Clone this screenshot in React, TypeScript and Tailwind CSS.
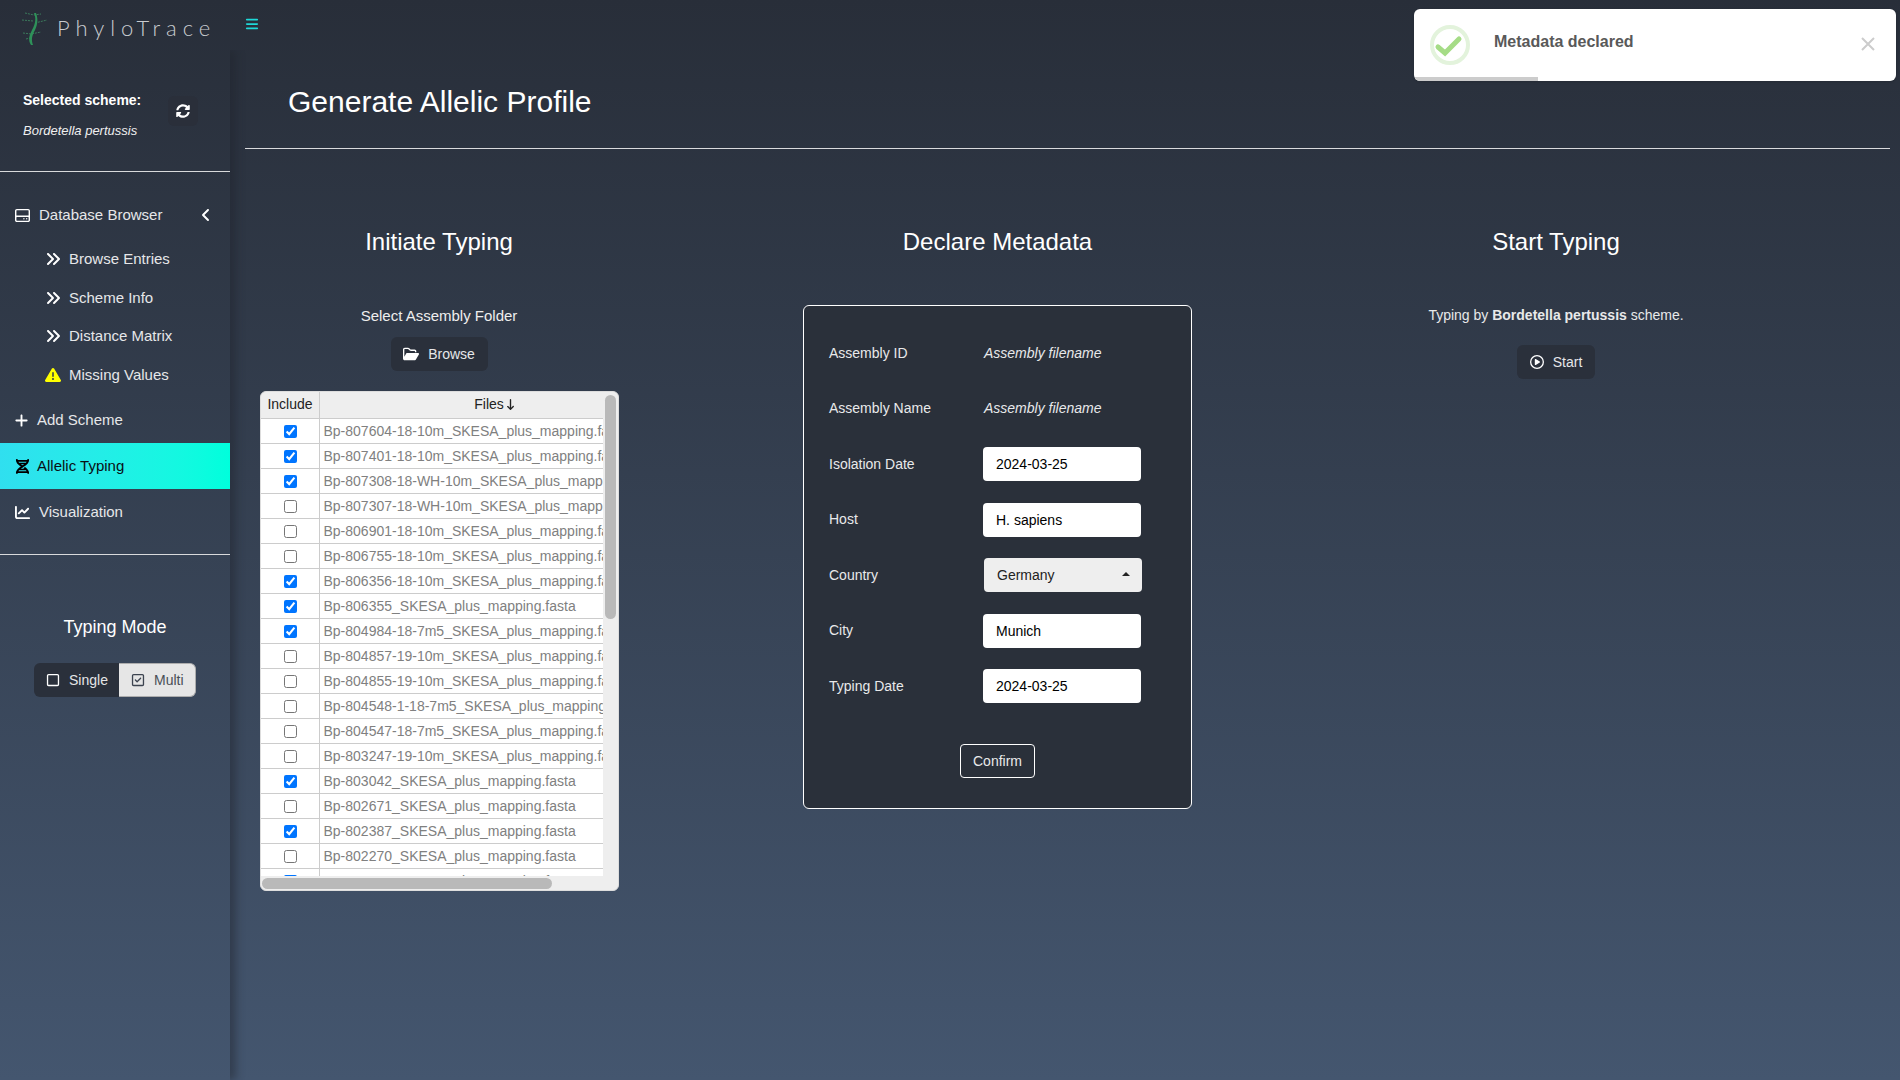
import { FaSyncAlt } from "react-icons/fa";
import {
  FaAngleLeft,
  FaAnglesRight,
  FaArrowDownLong,
  FaBars,
  FaChartLine,
  FaDna,
  FaPlus,
  FaRegCirclePlay,
  FaRegFolderOpen,
  FaRegHardDrive,
  FaRegSquare,
  FaRegSquareCheck,
  FaTriangleExclamation,
} from "react-icons/fa6";

const files: [string, boolean][] = [
  ["Bp-807604-18-10m_SKESA_plus_mapping.fasta", true],
  ["Bp-807401-18-10m_SKESA_plus_mapping.fasta", true],
  ["Bp-807308-18-WH-10m_SKESA_plus_mapping.fasta", true],
  ["Bp-807307-18-WH-10m_SKESA_plus_mapping.fasta", false],
  ["Bp-806901-18-10m_SKESA_plus_mapping.fasta", false],
  ["Bp-806755-18-10m_SKESA_plus_mapping.fasta", false],
  ["Bp-806356-18-10m_SKESA_plus_mapping.fasta", true],
  ["Bp-806355_SKESA_plus_mapping.fasta", true],
  ["Bp-804984-18-7m5_SKESA_plus_mapping.fasta", true],
  ["Bp-804857-19-10m_SKESA_plus_mapping.fasta", false],
  ["Bp-804855-19-10m_SKESA_plus_mapping.fasta", false],
  ["Bp-804548-1-18-7m5_SKESA_plus_mapping.fasta", false],
  ["Bp-804547-18-7m5_SKESA_plus_mapping.fasta", false],
  ["Bp-803247-19-10m_SKESA_plus_mapping.fasta", false],
  ["Bp-803042_SKESA_plus_mapping.fasta", true],
  ["Bp-802671_SKESA_plus_mapping.fasta", false],
  ["Bp-802387_SKESA_plus_mapping.fasta", true],
  ["Bp-802270_SKESA_plus_mapping.fasta", false],
  ["Bp-801944_SKESA_plus_mapping.fasta", true],
];

function Logo() {
  return (
    <div className="flex items-center w-[230px] h-[50px] pl-[22px]">
      <svg width="25" height="33" viewBox="0 0 25 33" className="mt-[7px] shrink-0">
        <path d="M0 8 L11 9 M3 1 L12 3 L19 2 M13 11 L25 8 M1 21 L9 22 L19 20 M4 27 L8 26" stroke="#3b7a5c" strokeWidth="1" strokeDasharray="2 1" fill="none" />
        <path d="M12 1 C14 6 14 11 10 18 C7 24 6 28 9 33 L11 33 C9 27 10 24 13 18 C16 12 16 6 14 1 Z" fill="#2e9159" />
      </svg>
      <span className="ml-[10px] mt-[5px] text-[22px] font-light tracking-[0.27em] text-[#c9ccd0] font-['Lato',sans-serif]">
        PhyloTrace
      </span>
    </div>
  );
}

function SubItem({ label, warn }: { label: string; warn?: boolean }) {
  return (
    <div className="flex items-center h-[38.5px] pl-[45px] text-[15px] text-[#e6e7e9]">
      <span className="flex justify-center w-[16px] mr-[8px]">
        {warn ? (
          <FaTriangleExclamation className="text-[16px] text-[#ffff00]" />
        ) : (
          <FaAnglesRight className="text-[16px] text-white" />
        )}
      </span>
      {label}
    </div>
  );
}

function Sidebar() {
  return (
    <aside className="w-[230px] h-full shrink-0 shadow-[6px_0_8px_rgba(30,35,45,0.45)] [clip-path:inset(0_-20px_0_0)]">
      <div className="relative h-[122px] border-b border-[#d9dadc] pl-[23px] pt-[42px] text-white">
        <div className="text-[14px] font-bold leading-[16px]">Selected scheme:</div>
        <div className="mt-[15px] text-[13px] italic leading-[16px] text-[#f0f0f0]">Bordetella pertussis</div>
        <button className="absolute left-[168px] top-[46px] flex items-center justify-center w-[30px] h-[30px] rounded-md bg-[#2a2f3a]">
          <FaSyncAlt className="text-[14px] text-white" />
        </button>
      </div>

      <div className="pt-[23px]">
        <div className="relative flex items-center h-[40px] pl-[15px] text-[15px] text-[#e6e7e9]">
          <FaRegHardDrive className="text-[15px] text-white mr-[9px]" />
          Database Browser
          <FaAngleLeft className="absolute left-[198px] text-[16px] text-white" />
        </div>
        <div className="pt-[5px]">
          <SubItem label="Browse Entries" />
          <SubItem label="Scheme Info" />
          <SubItem label="Distance Matrix" />
          <SubItem label="Missing Values" warn />
        </div>
        <div className="flex items-center h-[45px] mt-[4px] pl-[14px] text-[15px] text-[#e6e7e9]">
          <FaPlus className="text-[15px] text-white mr-[8px]" />
          Add Scheme
        </div>
        <div className="flex items-center h-[46px] pl-[15px] text-[15px] text-[#0a0f14] bg-linear-to-r from-[#30dfef] to-[#00ffdc]">
          <FaDna className="text-[15px] text-black mr-[7px]" />
          Allelic Typing
        </div>
        <div className="flex items-center h-[46px] pl-[15px] text-[15px] text-[#e6e7e9]">
          <FaChartLine className="text-[15px] text-white mr-[9px]" />
          Visualization
        </div>
      </div>

      <div className="mt-[19px] border-t border-[#d9dadc] pt-[62px]">
        <div className="text-center text-[18px] leading-[20px] text-white">Typing Mode</div>
        <div className="flex mt-[26px] ml-[34px] h-[34px] w-[162px] text-[14px]">
          <div className="flex items-center w-[85px] pl-[12px] rounded-l-md bg-[#2a303b] text-[#e4e5e7]">
            <FaRegSquare className="text-[14px] text-white mr-[9px]" />
            Single
          </div>
          <div className="flex items-center w-[77px] pl-[12px] rounded-r-md bg-[#e6e6e6] border border-[#adadad] border-l-0 text-[#4a4f57]">
            <FaRegSquareCheck className="text-[14px] text-[#3d4450] mr-[9px]" />
            Multi
          </div>
        </div>
      </div>
    </aside>
  );
}

function FileTable() {
  return (
    <div className="w-[359px] h-[500px] mx-auto mt-[20px] rounded-md bg-[#eeeeee] overflow-hidden flex flex-col border border-[#dddddd] text-left">
      <div className="flex h-[484px]">
        <div className="w-[344px] h-full overflow-hidden">
          <div className="flex h-[27px] pb-[2px] text-[14px] text-[#222222] border-b border-[#cccccc]">
            <div className="flex items-center justify-center w-[59px] pl-[1px] shrink-0 border-r border-[#cccccc] mb-[-2px] pb-[2px]">Include</div>
            <div className="flex items-center justify-center flex-1 pl-[68px]">
              Files
              <FaArrowDownLong className="ml-[1px] text-[11px] text-[#222222]" />
            </div>
          </div>
          {files.map(([name, checked]) => (
            <div key={name} className="flex h-[25px] bg-white border-b border-[#cccccc] text-[14px] text-[#808080]">
              <div className="flex items-center justify-center w-[59px] pl-[1px] shrink-0 border-r border-[#cccccc]">
                <input type="checkbox" defaultChecked={checked} />
              </div>
              <div className="pl-[4px] leading-[24px] whitespace-nowrap overflow-hidden flex-1">{name}</div>
            </div>
          ))}
        </div>
        <div className="flex-1 pl-[2px] pr-[2px] pt-[3px]">
          <div className="w-[11px] h-[224px] rounded-full bg-[#b9b9b9]" />
        </div>
      </div>
      <div className="flex-1 pl-[1px] pt-[2px]">
        <div className="w-[290px] h-[11px] rounded-full bg-[#b9b9b9]" />
      </div>
    </div>
  );
}

function MetaRow({ label, children }: { label: string; children: React.ReactNode }) {
  return (
    <div className="flex items-center h-[55.5px] text-[14px] text-[#e8e9ea]">
      <div className="w-[154px] shrink-0">{label}</div>
      {children}
    </div>
  );
}

function MetaInput({ value }: { value: string }) {
  return (
    <input
      defaultValue={value}
      className="w-[158px] h-[34px] rounded-[4px] bg-white px-[13px] text-[14px] text-black outline-none"
    />
  );
}

function MetadataCard() {
  return (
    <div className="w-[389px] h-[504px] mt-[49px] mx-auto rounded-md border border-white bg-[#2a303a] pt-[19.5px] pl-[25px]">
      <MetaRow label="Assembly ID">
        <span className="italic ml-[1px]">Assembly filename</span>
      </MetaRow>
      <MetaRow label="Assembly Name">
        <span className="italic ml-[1px]">Assembly filename</span>
      </MetaRow>
      <MetaRow label="Isolation Date">
        <MetaInput value="2024-03-25" />
      </MetaRow>
      <MetaRow label="Host">
        <MetaInput value="H. sapiens" />
      </MetaRow>
      <MetaRow label="Country">
        <div className="relative flex items-center w-[158px] h-[34px] ml-[1px] rounded-[4px] bg-[#eeeeee] pl-[13px] text-[#222222]">
          Germany
          <span className="absolute right-[12px] top-[14px] border-x-[4px] border-b-[4px] border-x-transparent border-b-[#222222]" />
        </div>
      </MetaRow>
      <MetaRow label="City">
        <MetaInput value="Munich" />
      </MetaRow>
      <MetaRow label="Typing Date">
        <MetaInput value="2024-03-25" />
      </MetaRow>
      <div className="flex justify-center pr-[25px] mt-[30px]">
        <button className="w-[75px] h-[34px] rounded-[4px] border border-white text-[14px] text-[#e8e9ea]">Confirm</button>
      </div>
    </div>
  );
}

function Toast() {
  return (
    <div className="absolute left-[1414px] top-[9px] w-[482px] h-[72px] rounded-md bg-white overflow-hidden shadow-sm">
      <div className="absolute left-[16px] top-[16px] w-[40px] h-[40px] rounded-full border-[4px] border-[#e3f3dc]">
        <svg width="32" height="32" viewBox="0 0 32 32">
          <path d="M4 18 L11 24 L25 10" fill="none" stroke="#a5dc86" strokeWidth="5" strokeLinecap="round" />
        </svg>
      </div>
      <div className="absolute left-[80px] top-[23px] text-[16px] font-bold leading-[20px] text-[#595959]">Metadata declared</div>
      <svg className="absolute left-[447px] top-[28px]" width="14" height="14" viewBox="0 0 14 14">
        <path d="M1 1 L13 13 M13 1 L1 13" stroke="#cccccc" strokeWidth="2" />
      </svg>
      <div className="absolute left-[1px] bottom-0 w-[123px] h-[4px] bg-[#cccccc]" />
    </div>
  );
}

export default function App() {
  return (
    <div className="relative h-[1080px] overflow-hidden flex flex-col bg-linear-to-b from-[#282e39] to-[#44566f] font-['Liberation_Sans',Arial,sans-serif]">
      <header className="flex h-[50px] shrink-0">
        <Logo />
        <button className="h-[50px] pl-[15px] pb-[1px] flex items-center">
          <FaBars className="text-[14px] text-[#1ed8d8] mb-[2px]" />
        </button>
      </header>
      <div className="flex flex-1">
        <Sidebar />
        <main className="flex-1 pl-[15px] pr-[10px]">
          <h1 className="h-[99px] pl-[43px] pt-[33px] border-b border-[#d9dadc] text-[30px] leading-[38px] text-white">
            Generate Allelic Profile
          </h1>
          <div className="grid grid-cols-[390px_390px_390px] gap-x-[168.5px] pt-[79px] ml-[-1px]">
            <section className="text-center">
              <h2 className="text-[24px] leading-[28px] text-white">Initiate Typing</h2>
              <p className="mt-[51px] text-[15px] leading-[18px] text-[#eeeeee]">Select Assembly Folder</p>
              <button className="mt-[12px] inline-flex items-center justify-center w-[97px] h-[34px] rounded-md bg-[#2a303b] text-[14px] text-[#e6e7e9]">
                <FaRegFolderOpen className="text-[16px] text-white mr-[9px]" />
                Browse
              </button>
              <FileTable />
            </section>
            <section>
              <h2 className="text-center text-[24px] leading-[28px] text-white">Declare Metadata</h2>
              <MetadataCard />
            </section>
            <section className="text-center">
              <h2 className="text-[24px] leading-[28px] text-white">Start Typing</h2>
              <p className="mt-[50px] text-[14px] leading-[18px] text-[#e8e9ea]">
                Typing by <b>Bordetella pertussis</b> scheme.
              </p>
              <button className="mt-[21px] inline-flex items-center justify-center w-[78px] h-[34px] rounded-md bg-[#2a303b] text-[14px] text-[#e6e7e9]">
                <FaRegCirclePlay className="text-[14px] text-white mr-[9px]" />
                Start
              </button>
            </section>
          </div>
        </main>
      </div>
      <Toast />
    </div>
  );
}
